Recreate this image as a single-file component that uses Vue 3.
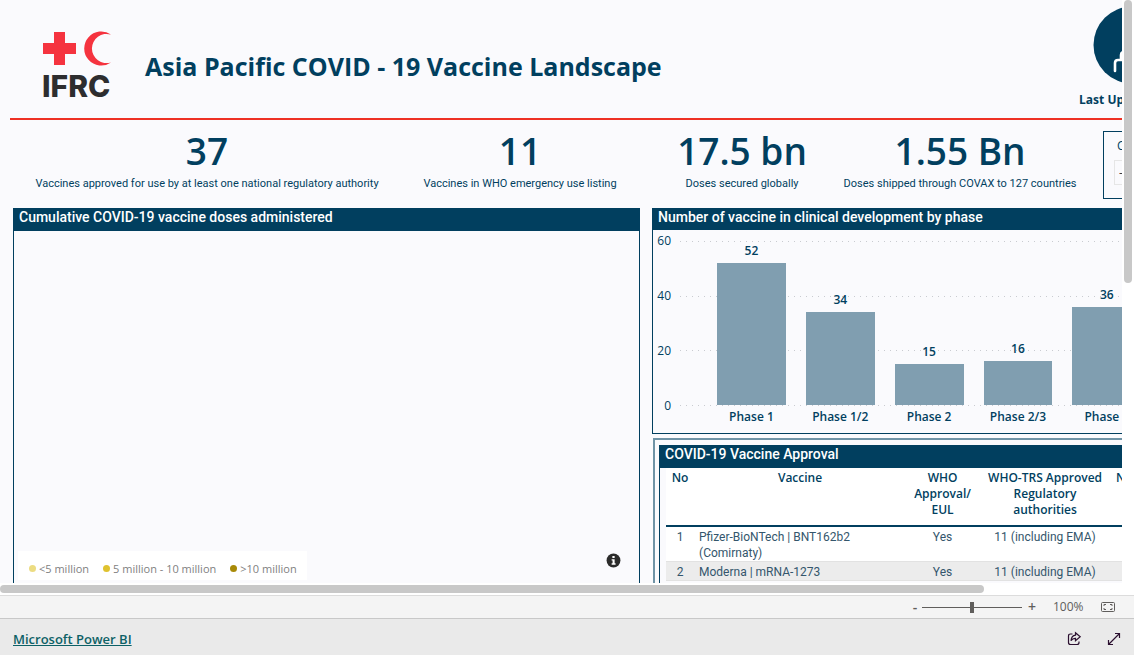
<script setup>
import { ref } from 'vue'

const zoom = ref(50)

const kpis = [
  { value: '37', label: 'Vaccines approved for use by at least one national regulatory authority' },
  { value: '11', label: 'Vaccines in WHO emergency use listing' },
  { value: '17.5 bn', label: 'Doses secured globally' },
  { value: '1.55 Bn', label: 'Doses shipped through COVAX to 127 countries' }
]

const axisMax = 60
const ticks = [60, 40, 20, 0]
const phases = [
  { name: 'Phase 1', count: 52 },
  { name: 'Phase 1/2', count: 34 },
  { name: 'Phase 2', count: 15 },
  { name: 'Phase 2/3', count: 16 },
  { name: 'Phase 3', count: 36 }
]

const vaccines = [
  { no: 1, name: 'Pfizer-BioNTech | BNT162b2 (Comirnaty)', who: 'Yes', trs: '11 (including EMA)' },
  { no: 2, name: 'Moderna | mRNA-1273', who: 'Yes', trs: '11 (including EMA)' }
]

const legend = [
  { label: '<5 million', tone: 'light' },
  { label: '5 million - 10 million', tone: 'mid' },
  { label: '>10 million', tone: 'dark' }
]
</script>

<template>
  <div class="shell">
    <div class="stage">
      <main class="viewport">
        <div class="canvas">
          <header class="head">
            <div class="logo">
              <svg class="emblem" viewBox="0 0 70 36" aria-hidden="true">
                <path d="M12 1H23V12H34V23H23V34H12V23H1V12H12Z" fill="#f5333f" />
                <path d="M69 3.6A17 17 0 1 0 69 31.4A14.6 14.6 0 1 1 69 3.6Z" fill="#f5333f" />
              </svg>
              <span class="logo-name">IFRC</span>
            </div>
            <h1>Asia Pacific COVID - 19 Vaccine Landscape</h1>
            <div class="updated">
              <svg class="badge" viewBox="0 0 78 78" aria-hidden="true">
                <circle cx="39" cy="39" r="38.5" fill="#013f5f" />
                <path d="M22 65V57Q22 54 25 54H28V49Q28 46 31 46H47Q50 46 50 49V54H53Q56 54 56 57V65" fill="none" stroke="#fff" stroke-width="2.6" stroke-linecap="round" />
                <circle cx="39" cy="33" r="8" fill="none" stroke="#fff" stroke-width="2.6" />
              </svg>
              <span>Last Updated</span>
            </div>
          </header>

          <section class="kpis">
            <div v-for="k in kpis" :key="k.label" class="kpi">
              <strong>{{ k.value }}</strong>
              <span>{{ k.label }}</span>
            </div>
            <div class="slicer">
              <label for="country">Country</label>
              <select id="country"><option>- All</option></select>
            </div>
          </section>

          <div class="panels">
            <section class="panel map">
              <h2>Cumulative COVID-19 vaccine doses administered</h2>
              <div class="map-body">
                <ul class="legend">
                  <li v-for="l in legend" :key="l.label"><i :class="l.tone"></i>{{ l.label }}</li>
                </ul>
                <button class="info" aria-label="Information">
                  <svg viewBox="0 0 16 16"><circle cx="8" cy="8" r="7.4" fill="#2b2b2b" /><path d="M6.8 3.2H9.2V5.4H6.8ZM6 6.6H9.2V11H10.2V12.4H6V11H7V8H6Z" fill="#fff" /></svg>
                </button>
              </div>
            </section>

            <div class="side">
              <section class="panel chart">
                <h2>Number of vaccine in clinical development by phase</h2>
                <div class="chart-body">
                  <div class="axis"><span v-for="t in ticks" :key="t">{{ t }}</span></div>
                  <div class="plot">
                    <div class="lines"><i v-for="t in ticks" :key="t"></i></div>
                    <div class="bars">
                      <div v-for="p in phases" :key="p.name" class="col">
                        <b>{{ p.count }}</b>
                        <div class="bar" :style="{ height: (p.count / axisMax) * 100 + '%' }"></div>
                      </div>
                    </div>
                    <div class="names"><b v-for="p in phases" :key="p.name">{{ p.name }}</b></div>
                  </div>
                </div>
              </section>

              <div class="frame">
                <section class="panel approval">
                  <h2>COVID-19 Vaccine Approval</h2>
                  <table>
                    <colgroup>
                      <col class="c-no" /><col class="c-name" /><col class="c-who" /><col class="c-trs" /><col />
                    </colgroup>
                    <thead>
                      <tr>
                        <th>No</th>
                        <th>Vaccine</th>
                        <th>WHO Approval/ EUL</th>
                        <th>WHO-TRS Approved Regulatory authorities</th>
                        <th class="last">National</th>
                      </tr>
                    </thead>
                    <tbody>
                      <tr v-for="v in vaccines" :key="v.no">
                        <td>{{ v.no }}</td>
                        <td class="name">{{ v.name }}</td>
                        <td>{{ v.who }}</td>
                        <td>{{ v.trs }}</td>
                        <td></td>
                      </tr>
                    </tbody>
                  </table>
                </section>
              </div>
            </div>
          </div>
        </div>
      </main>
      <div class="track-v"><div class="thumb-v"></div></div>
      <div class="track-h"><div class="thumb-h"></div></div>
    </div>

    <div class="zoombar">
      <button aria-label="Zoom out">-</button>
      <input v-model="zoom" type="range" min="0" max="100" aria-label="Zoom" />
      <button aria-label="Zoom in">+</button>
      <span class="pct">100%</span>
      <button class="fit" aria-label="Fit to page">
        <svg viewBox="0 0 16 12"><rect x="1.5" y="1.5" width="13" height="9" rx="1" /><path d="M4 5V3.5H6M10 3.5H12V5M12 7V8.5H10M6 8.5H4V7" /></svg>
      </button>
    </div>

    <footer class="foot">
      <a href="#">Microsoft Power BI</a>
      <div class="actions">
        <button aria-label="Share">
          <svg viewBox="0 0 16 16"><path d="M6.5 3H4.5Q2.5 3 2.5 5V11.5Q2.5 13.5 4.5 13.5H11Q13 13.5 13 11.5V10.5" /><path d="M9.5 1.8L14.2 5.7L9.5 9.6V7.4Q6.6 7.2 5 9.8Q5.4 4.6 9.5 4.1Z" /></svg>
        </button>
        <button aria-label="Full screen">
          <svg viewBox="0 0 16 16"><path d="M2.5 13.5L13.5 2.5M9 2.5H13.5V7M2.5 9V13.5H7" /></svg>
        </button>
      </div>
    </footer>
  </div>
</template>

<style>
html,
body {
  background: #fff;
}
</style>

<style scoped>
* {
  box-sizing: border-box;
}
.shell {
  --navy: #013f5f;
  display: flex;
  flex-direction: column;
  height: 100vh;
  overflow: hidden;
  font-family: 'Open Sans', 'Noto Sans', sans-serif;
  color: var(--navy);
}
button {
  border: 0;
  padding: 0;
  background: none;
  color: inherit;
  font: inherit;
}
svg {
  display: block;
}
.stage {
  flex: 1;
  min-height: 0;
  display: grid;
  grid-template-columns: 1fr 12px;
  grid-template-rows: 1fr 12px;
}
.viewport {
  min-width: 0;
  min-height: 0;
  overflow: hidden;
  background: #fafafd;
}
.canvas {
  display: flex;
  flex-direction: column;
  width: 114%;
  height: 100%;
}
.track-v {
  padding: 0 2px;
}
.thumb-v {
  height: 283px;
  border-radius: 4px;
  background: #c8c8c8;
}
.track-h {
  grid-column: 1 / 3;
  padding: 2px 0;
}
.thumb-h {
  width: 86.8%;
  height: 8px;
  border-radius: 4px;
  background: #c8c8c8;
}

.head {
  display: flex;
  align-items: flex-start;
  height: 120px;
  margin-left: 10px;
  border-bottom: 2px solid #ee3124;
}
.logo {
  width: 70px;
  margin: 31px 33px 0 32px;
}
.emblem {
  width: 70px;
  height: 36px;
}
.logo-name {
  display: block;
  margin-top: 5px;
  font: 800 30px/28px Inter, sans-serif;
  color: #2d2d2f;
}
h1 {
  margin: 48px 0 0;
  flex: 1;
  font-size: 25px;
  line-height: 36px;
  font-weight: 700;
  white-space: nowrap;
}
.updated {
  width: 110px;
  margin: 6px 90px 0 0;
  font-size: 12px;
  line-height: 16px;
  font-weight: 700;
  white-space: nowrap;
}
.badge {
  width: 78px;
  height: 78px;
  margin: 0 0 8px 14px;
}

.kpis {
  display: grid;
  grid-template-columns: 388fr 238fr 206fr 230fr 28fr 164fr;
  height: 88px;
  margin: 0 12px 0 13px;
}
.kpi {
  display: flex;
  flex-direction: column;
  align-items: center;
  min-width: 0;
  white-space: nowrap;
}
.kpi strong {
  margin-top: 6px;
  font-size: 37px;
  line-height: 50px;
  font-weight: 600;
}
.kpi span {
  font-family: Roboto, sans-serif;
  font-size: 11px;
  line-height: 16px;
}
.slicer {
  grid-column: 6;
  height: 68px;
  margin-top: 11px;
  padding: 5px 10px;
  border: 1px solid var(--navy);
  font-size: 12px;
}
.slicer label {
  display: block;
  padding-left: 3px;
  line-height: 18px;
}
.slicer select {
  width: 100%;
  height: 25px;
  margin-top: 5px;
  border: 1px solid #e6e6e6;
  background: #fafafd;
  color: #333;
  font: 12px 'Open Sans', sans-serif;
}

.panels {
  flex: 1;
  min-height: 0;
  display: grid;
  grid-template-columns: 627fr 615fr;
  gap: 12px;
  margin: 0 12px 0 13px;
}
.panel {
  border: 1px solid var(--navy);
}
h2 {
  height: 22px;
  margin: 0;
  padding: 0 5px;
  background: var(--navy);
  color: #fff;
  font: 500 14px/16px Roboto, sans-serif;
  white-space: nowrap;
}
.map {
  display: flex;
  flex-direction: column;
  border-bottom: 0;
}
.map-body {
  flex: 1;
  display: flex;
  align-items: flex-end;
  justify-content: space-between;
  padding: 0 18px 3px 4px;
}
.legend {
  display: flex;
  align-items: center;
  gap: 14px;
  height: 29px;
  margin: 0;
  padding: 6px 10px 0 11px;
  list-style: none;
  background: #fff;
  color: #7f7f7f;
  font-size: 11px;
  line-height: 16px;
  white-space: nowrap;
}
.legend li {
  display: flex;
  align-items: center;
  gap: 3px;
}
.legend i {
  width: 7px;
  height: 7px;
  border-radius: 50%;
}
.light {
  background: #ecdc82;
}
.mid {
  background: #dfc22f;
}
.dark {
  background: #a88a08;
}
.info {
  width: 15px;
  height: 15px;
  margin-bottom: 12px;
}

.side {
  display: flex;
  flex-direction: column;
  min-width: 0;
  min-height: 0;
  overflow: hidden;
}
.chart {
  flex: none;
  height: 226px;
  font-size: 12px;
}
.chart h2 {
  height: 21px;
}
.chart-body {
  display: flex;
  padding-top: 11px;
}
.axis {
  display: flex;
  flex-direction: column;
  justify-content: space-between;
  width: 18px;
  height: 181px;
  margin: -8px 9px 0 0;
  text-align: right;
  line-height: 16px;
}
.plot {
  position: relative;
  flex: 1;
}
.lines {
  position: absolute;
  inset: 0 0 auto 0;
  display: flex;
  flex-direction: column;
  justify-content: space-between;
  height: 165px;
}
.lines i {
  height: 1px;
  background: repeating-linear-gradient(90deg, #c9cbd0 0 1px, transparent 1px 6px);
}
.bars,
.names {
  display: grid;
  grid-template-columns: repeat(6, 1fr);
  padding: 0 26px 0 27px;
  text-align: center;
}
.bars {
  position: relative;
  height: 164px;
}
.col {
  display: flex;
  flex-direction: column;
  justify-content: flex-end;
  height: 164px;
  padding: 0 10px;
}
.col b,
.names b {
  font-weight: 600;
  line-height: 16px;
}
.col b {
  margin-bottom: 4px;
}
.bar {
  flex: none;
  background: #809eb0;
}
.names {
  padding-top: 4px;
}

.frame {
  flex: 1;
  min-height: 0;
  margin: 4px 0 0 1px;
  padding: 5px 5px 0 4px;
  border: 1px solid #6f93a6;
  border-width: 2px 1px 0 2px;
  overflow: hidden;
}
.approval {
  height: 100%;
  border-bottom: 0;
}
table {
  width: calc(100% - 6px);
  margin-left: 6px;
  border-collapse: collapse;
  table-layout: fixed;
  background: #fff;
  font-size: 12px;
  line-height: 16px;
}
.c-no {
  width: 28px;
}
.c-name {
  width: 212px;
}
.c-who {
  width: 73px;
}
.c-trs {
  width: 132px;
}
th {
  height: 58px;
  padding: 2px 5px 0;
  vertical-align: top;
  font-weight: 600;
  border-bottom: 2px solid var(--navy);
}
.last {
  text-align: left;
  white-space: nowrap;
}
td {
  padding: 2px 5px 0;
  vertical-align: top;
  text-align: center;
  color: #34566c;
  font-family: Roboto, sans-serif;
}
td.name {
  padding-right: 40px;
  text-align: left;
}
tbody tr:nth-child(2) {
  background: #ececec;
  border-top: 1px solid #e2e2e2;
  border-bottom: 1px solid #e2e2e2;
}

.zoombar {
  display: flex;
  align-items: center;
  justify-content: flex-end;
  height: 24px;
  padding-right: 18px;
  border-top: 1px solid #dcdcdc;
  border-bottom: 1px solid #c8c8c8;
  background: #f4f4f4;
  color: #605e5c;
  font-size: 12px;
  line-height: 16px;
}
.zoombar button {
  width: 8px;
  text-align: center;
  font-size: 14px;
  font-weight: 600;
}
.zoombar input {
  appearance: none;
  width: 100px;
  height: 12px;
  margin: 0 6px 0 3px;
  background: linear-gradient(#605e5c, #605e5c) center / 100% 1px no-repeat;
}
.zoombar input::-webkit-slider-thumb {
  appearance: none;
  width: 4px;
  height: 11px;
  background: #605e5c;
}
.pct {
  width: 30px;
  margin: 0 17px;
  white-space: nowrap;
}
.zoombar .fit {
  width: 16px;
}
.fit svg {
  width: 16px;
  height: 12px;
  fill: none;
  stroke: #605e5c;
}
.foot {
  display: flex;
  align-items: center;
  justify-content: space-between;
  height: 36px;
  padding: 3px 12px 0 13px;
  background: #eaeaea;
}
.foot a {
  color: #0d6166;
  font-size: 13px;
  font-weight: 600;
  line-height: 18px;
}
.actions {
  display: flex;
  gap: 24px;
}
.actions svg {
  width: 16px;
  height: 16px;
  fill: none;
  stroke: #2b1030;
  stroke-width: 1.2;
}
</style>
